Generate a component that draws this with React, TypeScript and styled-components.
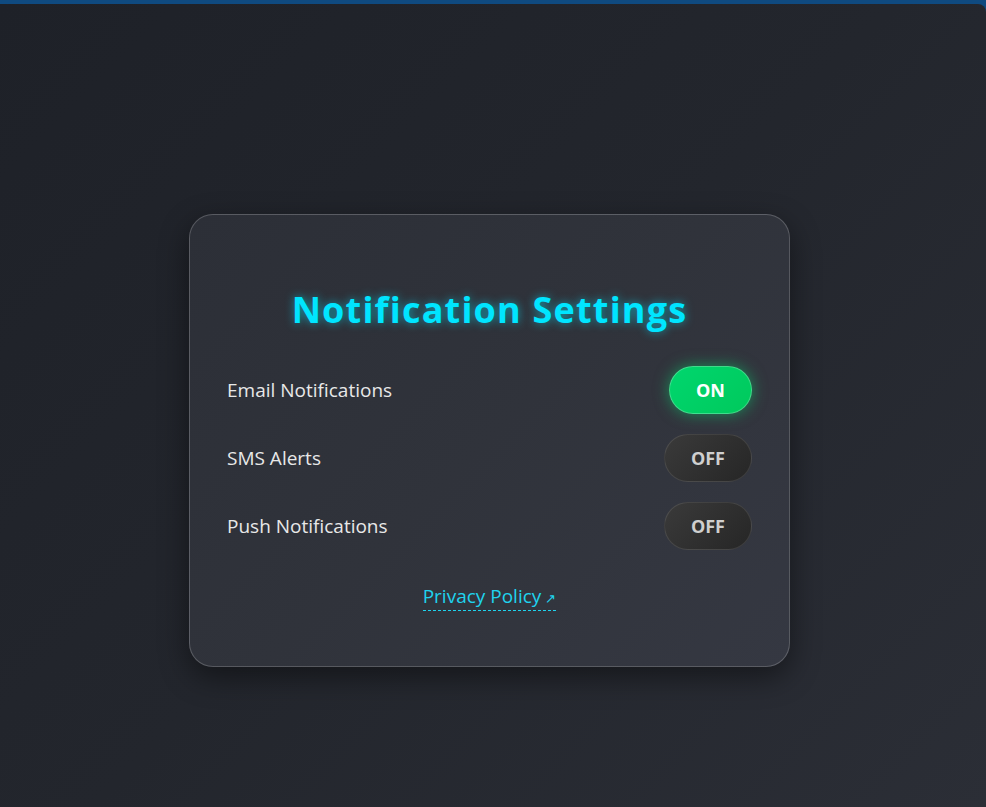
import React, { useState } from "react";
import styled, { createGlobalStyle } from "styled-components";

const GlobalStyle = createGlobalStyle`
  html, body {
    margin: 0;
    padding: 0;
    background: #0f4a80;
    font-family: "Open Sans", "Noto Sans", "Liberation Sans", sans-serif;
  }
  * { box-sizing: border-box; }
`;

const Page = styled.main`
  margin-top: 4px;
  min-height: calc(100vh - 4px);
  border-top-right-radius: 8px;
  background: linear-gradient(135deg, #1e2128 0%, #23262d 50%, #2b2e36 100%);
  display: flex;
  justify-content: center;
  align-items: flex-start;
  padding: 210px 7px 0 0;
`;

const Card = styled.section`
  width: 601px;
  padding: 33px 37px 55px;
  border-radius: 24px;
  border: 1px solid rgba(255, 255, 255, 0.2);
  background: linear-gradient(135deg, #2c2f37 0%, #30333b 50%, #353842 100%);
  box-shadow: 0 10px 30px rgba(0, 0, 0, 0.45);
  display: flex;
  flex-direction: column;
`;

const Title = styled.h1`
  margin: 41px 0 35px;
  text-align: center;
  font-size: 36px;
  line-height: 42px;
  letter-spacing: 1.2px;
  font-weight: 700;
  color: #00e5ff;
  text-shadow: 0 0 10px rgba(0, 229, 255, 0.6);
`;

const List = styled.div`
  display: flex;
  flex-direction: column;
  gap: 20px;
`;

const Row = styled.div`
  display: flex;
  align-items: center;
  justify-content: space-between;
`;

const Label = styled.span`
  font-size: 19px;
  line-height: 26px;
  color: #e8e8e8;
`;

const Toggle = styled.button<{ $on: boolean }>`
  font-family: inherit;
  font-size: 18px;
  font-weight: 700;
  line-height: 24px;
  padding: 11px 26px;
  border-radius: 999px;
  cursor: pointer;
  border: 1px solid ${(p) => (p.$on ? "rgba(255,255,255,0.25)" : "rgba(255,255,255,0.1)")};
  color: ${(p) => (p.$on ? "#ffffff" : "#cfcfcf")};
  background: ${(p) =>
    p.$on
      ? "linear-gradient(135deg, #00d66e 0%, #00c95c 100%)"
      : "linear-gradient(135deg, #3a3a3a 0%, #262626 100%)"};
  box-shadow: ${(p) => (p.$on ? "0 0 15px rgba(0, 230, 118, 0.5)" : "none")};
`;

const Footer = styled.div`
  display: flex;
  justify-content: center;
  margin-top: 34px;
`;

const Link = styled.a`
  font-size: 19px;
  line-height: 24px;
  color: #1fd3ee;
  text-decoration: none;
  border-bottom: 1px dashed #1fd3ee;
`;

const Arrow = styled.span`
  font-size: 13px;
  margin-left: 4px;
`;

const settings = [
  { key: "email", label: "Email Notifications", on: true },
  { key: "sms", label: "SMS Alerts", on: false },
  { key: "push", label: "Push Notifications", on: false },
];

export default function App() {
  const [state, setState] = useState<Record<string, boolean>>(
    Object.fromEntries(settings.map((s) => [s.key, s.on]))
  );
  return (
    <>
      <GlobalStyle />
      <Page>
        <Card>
          <Title>Notification Settings</Title>
          <List>
            {settings.map((s) => (
              <Row key={s.key}>
                <Label>{s.label}</Label>
                <Toggle
                  $on={state[s.key]}
                  onClick={() => setState((p) => ({ ...p, [s.key]: !p[s.key] }))}
                >
                  {state[s.key] ? "ON" : "OFF"}
                </Toggle>
              </Row>
            ))}
          </List>
          <Footer>
            <Link href="#">
              Privacy Policy<Arrow>↗</Arrow>
            </Link>
          </Footer>
        </Card>
      </Page>
    </>
  );
}
